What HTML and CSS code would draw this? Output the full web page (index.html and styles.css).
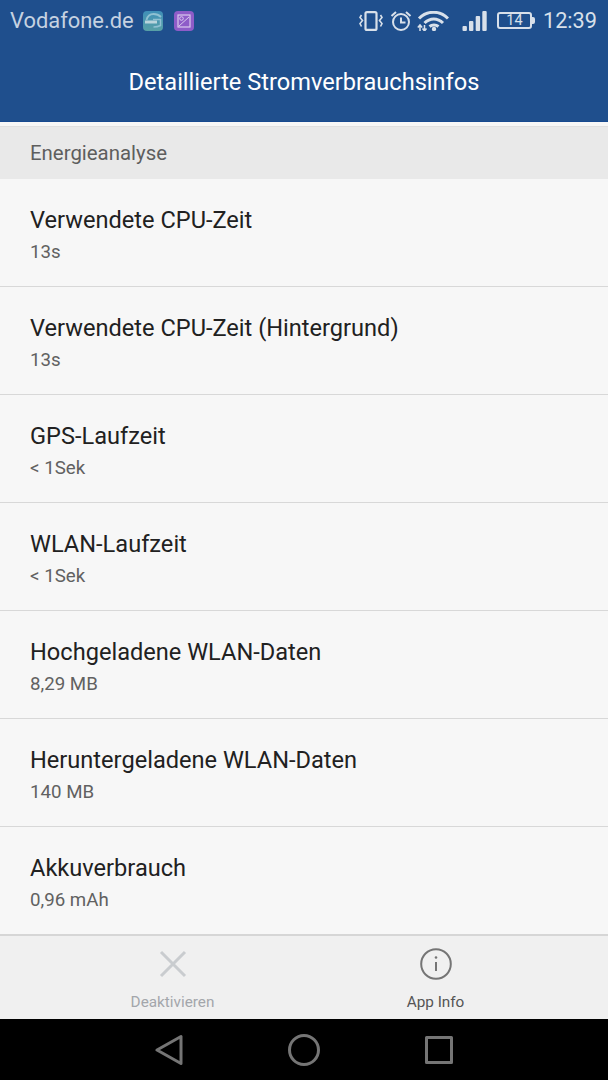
FILE: index.html
```
<!DOCTYPE html>
<html lang="de">
<head>
<meta charset="utf-8">
<title>Detaillierte Stromverbrauchsinfos</title>
<link rel="stylesheet" href="styles.css">
</head>
<body>
<div class="phone">
  <header class="header">
    <div class="status">
      <div class="status-left">
        <span class="carrier">Vodafone.de</span>
        <svg class="app-icon" width="20" height="20" viewBox="0 0 20 20"><defs><linearGradient id="teal" x1="0" y1="0" x2="0" y2="1"><stop offset="0" stop-color="#3f8fb8"/><stop offset="1" stop-color="#58a0a6"/></linearGradient></defs><rect width="20" height="20" rx="4" fill="url(#teal)"/><path d="M18 6C16 4 13 3 10.500 3 7 3 4.500 5 3.500 9" fill="none" stroke="#8fc0d2" stroke-width="1.800"/><rect x="2" y="9.500" width="12" height="3" fill="#b9d4dc"/><path d="M10 8.500h7.500v6c-2 1-4 1.500-7 1.500" fill="none" stroke="#8fc0d2" stroke-width="1.500"/></svg>
        <svg class="app-icon" width="20" height="20" viewBox="0 0 20 20"><rect width="20" height="20" rx="4" fill="#8e5cc8"/><rect x="4" y="4" width="12" height="12" fill="none" stroke="#d9c9ee" stroke-width="1.200"/><circle cx="7.500" cy="7.500" r="1.800" fill="none" stroke="#d9c9ee"/><path d="M5 15 15 6" stroke="#d9c9ee" stroke-width="1"/></svg>
      </div>
      <div class="status-right">
        <svg width="24" height="20" viewBox="0 0 24 20" fill="none" stroke="#d8e0ea" stroke-width="2.200"><rect x="6.500" y="1.100" width="11" height="17.800" rx="1.500"/><path d="M2.500 4 1 6.500l2.500 3L1 12.500l1.500 3M21.500 4 23 6.500l-2.500 3 2.500 3-1.500 3" stroke-width="1.600"/></svg>
        <svg class="gap-a" width="22" height="20" viewBox="0 0 22 20" fill="none" stroke="#d8e0ea" stroke-width="2"><circle cx="11" cy="11" r="8"/><path d="M11 6.500v5h4.500M1.500 5 6 1M20.500 5 16 1"/></svg>
        <svg class="gap-b" width="32" height="20" viewBox="0 0 32 20" fill="none" stroke="#d8e0ea" stroke-width="3"><path d="M2 7.500C10 -.8 23 -.8 31 7.500M7.500 12C13 6.500 20.500 6.500 26 12M12.500 15.500C15 13.500 19 13.500 21.500 15.500"/><circle cx="17" cy="18" r="2.200" fill="#d8e0ea" stroke="none"/><path d="M3 20v-5.500M.8 16.500 3 14l2.200 2.500M7.500 14v5.500M5.500 17.500 7.500 20l2-2.500" stroke-width="1.500"/></svg>
        <svg class="gap-c" width="25" height="20" viewBox="0 0 25 20" fill="#d8e0ea"><rect x="0.500" y="15" width="4.400" height="5" rx="1"/><rect x="7" y="10" width="4.400" height="10" rx="1"/><rect x="13.700" y="5" width="4.400" height="15" rx="1"/><rect x="20.300" y="0" width="4.400" height="20" rx="1"/></svg>
        <div class="battery"><span class="battery-level">14</span></div>
        <span class="clock">12:39</span>
      </div>
    </div>
    <h1 class="title">Detaillierte Stromverbrauchsinfos</h1>
  </header>
  <div class="section">Energieanalyse</div>
  <main class="list">
    <div class="row"><div class="row-title">Verwendete CPU-Zeit</div><div class="row-value">13s</div></div>
    <div class="row"><div class="row-title">Verwendete CPU-Zeit (Hintergrund)</div><div class="row-value">13s</div></div>
    <div class="row"><div class="row-title">GPS-Laufzeit</div><div class="row-value">&lt; 1Sek</div></div>
    <div class="row"><div class="row-title">WLAN-Laufzeit</div><div class="row-value">&lt; 1Sek</div></div>
    <div class="row"><div class="row-title">Hochgeladene WLAN-Daten</div><div class="row-value">8,29 MB</div></div>
    <div class="row"><div class="row-title">Heruntergeladene WLAN-Daten</div><div class="row-value">140 MB</div></div>
    <div class="row"><div class="row-title">Akkuverbrauch</div><div class="row-value">0,96 mAh</div></div>
  </main>
  <div class="actions">
    <div class="action action-off">
      <svg width="32" height="32" viewBox="0 0 32 32" fill="none" stroke="#c9cccf" stroke-width="3"><path d="M4 4 28 28M28 4 4 28"/></svg>
      <span>Deaktivieren</span>
    </div>
    <div class="action">
      <svg width="32" height="32" viewBox="0 0 32 32" fill="none" stroke="#757575" stroke-width="2"><circle cx="16" cy="16" r="14.800"/><path d="M16 14v9"/><circle cx="16" cy="9.500" r="1.300" fill="#757575" stroke="none"/></svg>
      <span>App Info</span>
    </div>
  </div>
  <nav class="nav">
    <svg width="28" height="32" viewBox="0 0 28 32" fill="none" stroke="#757575" stroke-width="3" stroke-linejoin="round"><path d="M26 2.500V29.500L2 16Z"/></svg>
    <svg width="32" height="32" viewBox="0 0 32 32" fill="none" stroke="#757575" stroke-width="3"><circle cx="16" cy="16" r="14.500"/></svg>
    <svg width="28" height="28" viewBox="0 0 28 28" fill="none" stroke="#757575" stroke-width="3" stroke-linejoin="round"><rect x="1.500" y="1.500" width="25" height="25"/></svg>
  </nav>
</div>
</body>
</html>
```
FILE: styles.css
```
* { box-sizing: border-box; margin: 0; padding: 0; }
html, body { width: 608px; height: 1080px; overflow: hidden; }
body { font-family: Roboto, "Liberation Sans", sans-serif; background: #f7f7f7; }
.phone { width: 608px; height: 1080px; display: flex; flex-direction: column; }
.header { height: 122px; background: #1f4f8d; flex: none; color: #fff; border-bottom: 1px solid #174a90; }
.status { height: 41px; display: flex; justify-content: space-between; align-items: center; padding: 0 11px 0 10px; }
.status-left { display: flex; align-items: center; }
.carrier { font-size: 21.900px; color: #c5d2e1; margin-right: 9px; }
.app-icon { margin-right: 11px; }
.status-right { display: flex; align-items: center; color: #d8e0ea; }
.gap-a { margin-left: 7px; }
.gap-b { margin-left: 5px; }
.gap-c { margin-left: 13px; }
.battery { margin-left: 10px; width: 35px; height: 17px; border: 2px solid #d8e0ea; border-radius: 3px; display: flex; align-items: center; justify-content: center; position: relative; }
.battery::after { content: ""; position: absolute; right: -5px; top: 3px; width: 3px; height: 7px; background: #d8e0ea; border-radius: 0 2px 2px 0; }
.battery-level { font-size: 14.500px; color: #d8e0ea; }
.clock { margin-left: 11px; font-size: 21.700px; color: #d8e0ea; }
.title { font-size: 23.600px; font-weight: 400; text-align: center; line-height: 82px; height: 80px; }
.section { flex: none; margin-top: 4px; height: 53px; background: #e9e9e9; border-top: 1px solid #e0e0e0; color: #5e5e5e; font-size: 20.400px; padding-left: 30px; line-height: 52px; }
.list { flex: 1; display: flex; flex-direction: column; min-height: 0; }
.row { height: 108px; flex: none; padding: 27px 30px 0; border-bottom: 1px solid #d8d8d8; }
.row:last-child { border-bottom: none; height: 100%; flex: 1; }
.row-title { font-size: 23.600px; line-height: 28px; color: #212121; }
.row-value { font-size: 18.700px; line-height: 24px; margin-top: 6px; color: #616161; }
.actions { flex: none; height: 85px; background: #f0f0f0; border-top: 2px solid #d6d6d6; display: grid; grid-template-columns: 1fr 1fr; padding: 0 41px; }
.action { display: flex; flex-direction: column; align-items: center; padding-top: 12px; font-size: 15.300px; color: #555; gap: 12px; }
.action span { line-height: 20px; }
.action-off { color: #a3a6ab; }
.nav { flex: none; height: 61px; background: #000; display: grid; grid-template-columns: 135px 135px 135px; justify-content: center; justify-items: center; align-items: center; }
```
